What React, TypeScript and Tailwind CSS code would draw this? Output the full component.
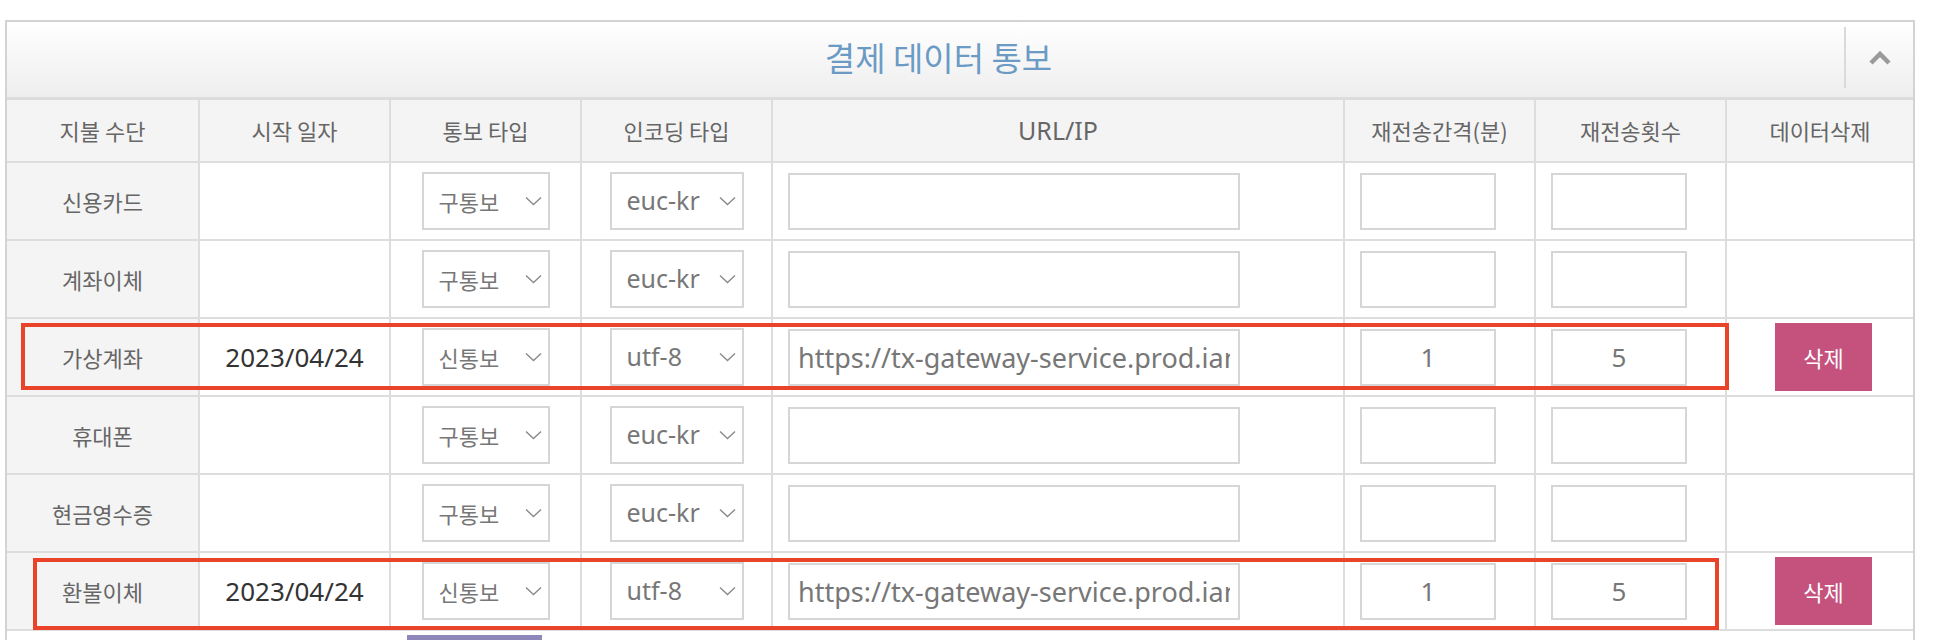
import React from "react";

// column widths include each cell's right border
const gridCols =
  "grid grid-cols-[193px_191px_191px_191px_572px_191px_191px_186px]";
const ko = "font-['Noto_Sans_CJK_KR',sans-serif]";
const latin = "font-['Noto_Sans','Noto_Sans_CJK_KR',sans-serif]";
const cell = "flex items-center border-r-2 border-[#dddddd]";

interface Row {
  label: string;
  date?: string;
  type: string;
  enc: string;
  url?: string;
  interval?: string;
  count?: string;
  mark?: "a" | "b";
}

const rows: Row[] = [
  { label: "신용카드", type: "구통보", enc: "euc-kr" },
  { label: "계좌이체", type: "구통보", enc: "euc-kr" },
  {
    label: "가상계좌",
    date: "2023/04/24",
    type: "신통보",
    enc: "utf-8",
    url: "https://tx-gateway-service.prod.iamport.co/notify",
    interval: "1",
    count: "5",
    mark: "a",
  },
  { label: "휴대폰", type: "구통보", enc: "euc-kr" },
  { label: "현금영수증", type: "구통보", enc: "euc-kr" },
  {
    label: "환불이체",
    date: "2023/04/24",
    type: "신통보",
    enc: "utf-8",
    url: "https://tx-gateway-service.prod.iamport.co/notify",
    interval: "1",
    count: "5",
    mark: "b",
  },
];

const Chevron = () => (
  <svg
    width="17"
    height="10"
    viewBox="0 0 17 10"
    className="pointer-events-none absolute right-[8px] top-1/2 -translate-y-1/2"
  >
    <path d="M1 1.5 L8.5 8.5 L16 1.5" fill="none" stroke="#8a8a8a" strokeWidth="1.4" />
  </svg>
);

const Select = ({ value, wide }: { value: string; wide?: boolean }) => {
  const isKo = /[가-힣]/.test(value);
  return (
    <div className={`relative ${wide ? "w-[134px]" : "w-[128px]"} h-[58px]`}>
      <select
        defaultValue={value}
        className={`h-full w-full appearance-none border-2 border-[#d6d6d6] bg-white pl-[15px] text-[#777777] outline-none ${
          isKo ? `${ko} text-[22px]` : `${latin} text-[25px]`
        }`}
      >
        <option>{value}</option>
      </select>
      <Chevron />
    </div>
  );
};

const TextInput = ({ value, className }: { value?: string; className: string }) => (
  <input
    readOnly
    defaultValue={value ?? ""}
    className={`border-2 border-[#d6d6d6] bg-white text-[#777777] outline-none ${latin} ${className}`}
  />
);

export default function App() {
  return (
    <div className="min-h-[640px] bg-white pt-[20px]">
      <div className="ml-[5px] w-[1910px] border-x-2 border-t-2 border-[#d3d3d3]">
        {/* title band */}
        <div className="flex h-[78px] border-b-[3px] border-[#dcdcdc] bg-linear-to-b from-white to-[#eeeeee]">
          <div
            className={`flex flex-1 items-center justify-center pb-[4px] pl-[26px] ${ko} text-[33px] text-[#6b9bc5]`}
          >
            결제 데이터 통보
          </div>
          <div className="mt-[5px] flex h-[61px] w-[69px] items-center justify-center border-l-2 border-[#dadada]">
            <svg width="24" height="16" viewBox="0 0 24 16">
              <path
                d="M3 13 L12 4 L21 13"
                fill="none"
                stroke="#9a9a9a"
                strokeWidth="4.5"
              />
            </svg>
          </div>
        </div>

        {/* header */}
        <div
          className={`${gridCols} h-[63px] border-b-2 border-[#dddddd] bg-[#f4f4f4] text-[#666666] ${ko} text-[22px]`}
        >
          <div className={`${cell} justify-center`}>지불 수단</div>
          <div className={`${cell} justify-center`}>시작 일자</div>
          <div className={`${cell} justify-center`}>통보 타입</div>
          <div className={`${cell} justify-center`}>인코딩 타입</div>
          <div className={`${cell} justify-center ${latin} text-[25px]`}>URL/IP</div>
          <div className={`${cell} justify-center`}>재전송간격(분)</div>
          <div className={`${cell} justify-center`}>재전송횟수</div>
          <div className="flex items-center justify-center">데이터삭제</div>
        </div>

        {/* rows */}
        {rows.map((r) => (
          <div key={r.label} className={`${gridCols} relative h-[78px] border-b-2 border-[#dddddd]`}>
            <div className={`${cell} justify-center bg-[#f4f4f4] ${ko} text-[22px] text-[#666666]`}>
              {r.label}
            </div>
            <div className={`${cell} justify-center ${latin} text-[26px] text-[#333333]`}>
              {r.date}
            </div>
            <div className={`${cell} justify-center`}>
              <Select value={r.type} />
            </div>
            <div className={`${cell} justify-center`}>
              <Select value={r.enc} wide />
            </div>
            <div className={`${cell} pl-[15px]`}>
              <TextInput value={r.url} className="h-[57px] w-[452px] px-[8px] text-[27px]" />
            </div>
            <div className={`${cell} pl-[15px]`}>
              <TextInput value={r.interval} className="h-[57px] w-[136px] text-center text-[26px]" />
            </div>
            <div className={`${cell} pl-[15px]`}>
              <TextInput value={r.count} className="h-[57px] w-[136px] text-center text-[26px]" />
            </div>
            <div className="flex items-center justify-center pl-[7px]">
              {r.date && (
                <button className={`h-[68px] w-[97px] bg-[#c5527d] ${ko} text-[22px] text-white`}>
                  삭제
                </button>
              )}
            </div>

            {r.mark === "a" && (
              <div className="pointer-events-none absolute left-[14px] top-[4px] h-[67px] w-[1708px] border-4 border-[#e9432a]" />
            )}
            {r.mark === "b" && (
              <div className="pointer-events-none absolute left-[26px] top-[5px] h-[72px] w-[1686px] border-4 border-[#e9432a]" />
            )}
          </div>
        ))}

        {/* next block, cut off by the window */}
        <div className="h-[40px] pl-[400px] pt-[4px]">
          <div className="h-[36px] w-[135px] bg-[#8e87b9]" />
        </div>
      </div>
    </div>
  );
}
